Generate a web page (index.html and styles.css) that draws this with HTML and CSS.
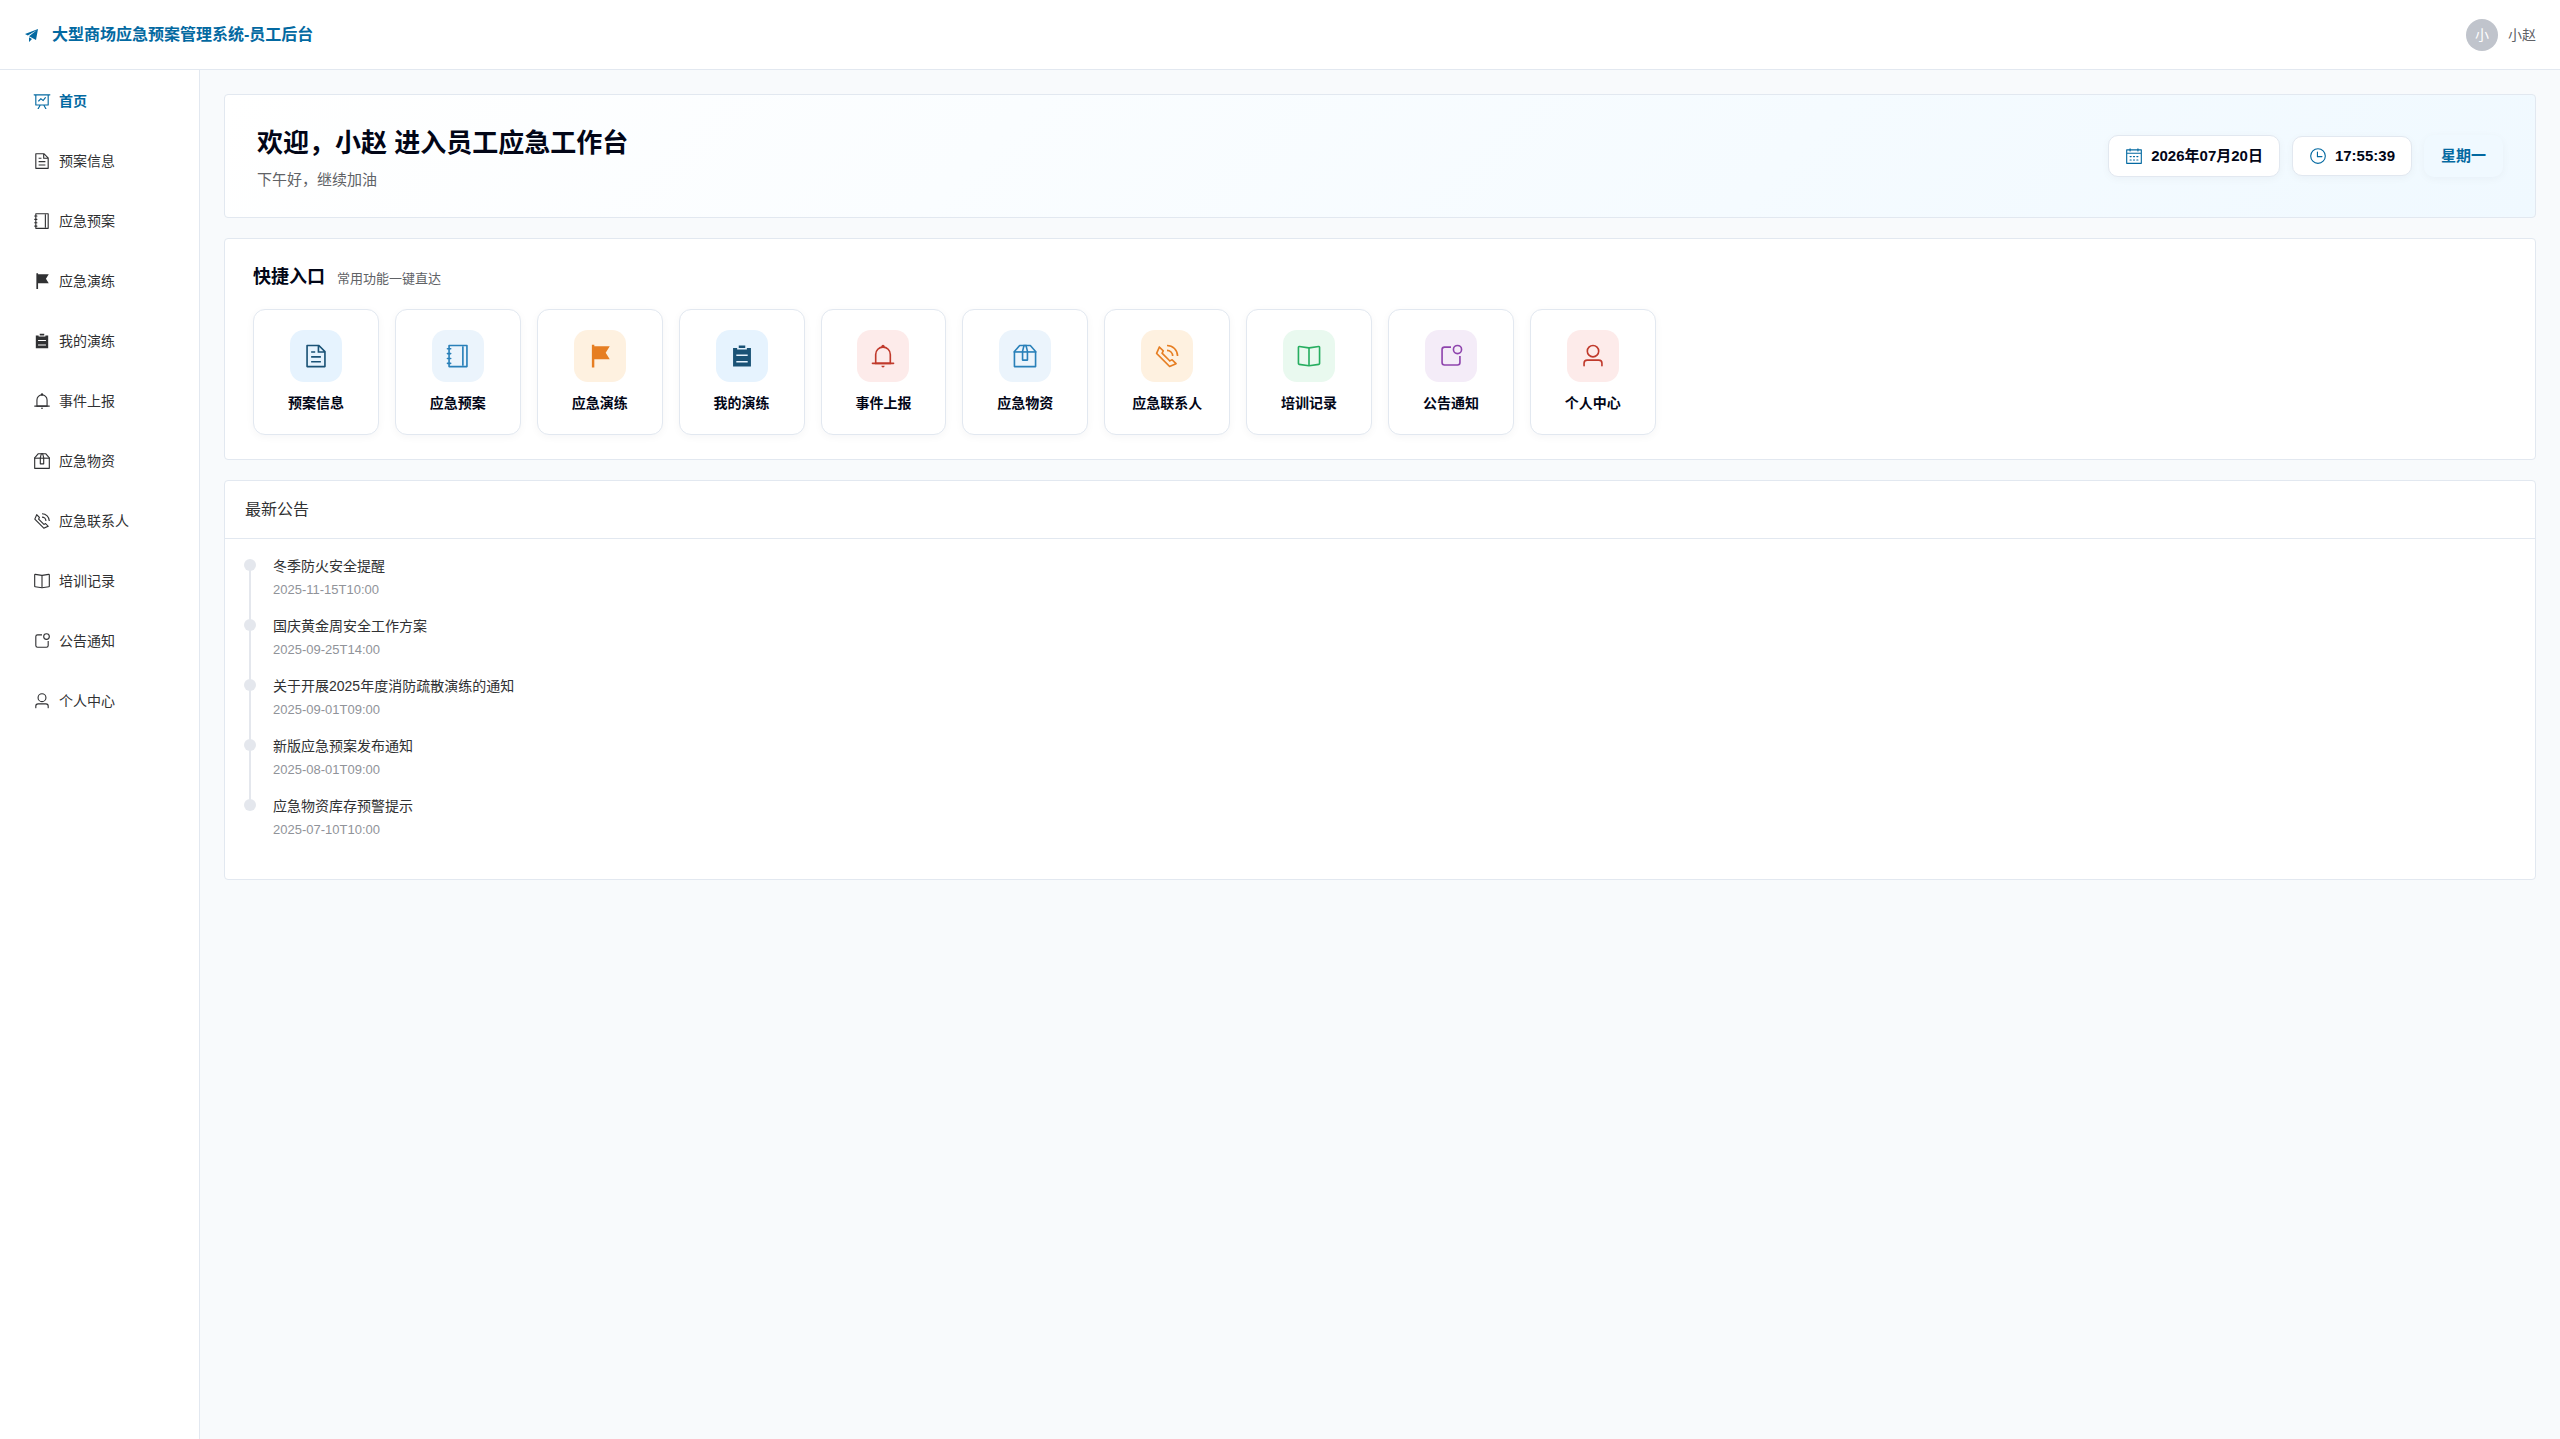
FILE: index.html
```html
<!DOCTYPE html>
<html lang="zh-CN">
<head>
    <meta charset="UTF-8">
    <meta name="viewport" content="width=device-width, initial-scale=1.0">
    <title>大型商场应急预案管理系统-员工后台</title>
    <link rel="stylesheet" href="styles.css">
</head>
<body>
    <!-- 图标库 -->
    <svg class="icon-sprite" xmlns="http://www.w3.org/2000/svg">
        <symbol id="i-promotion" viewBox="0 0 1024 1024"><path d="m64 448 832-320-128 704-446.08-243.328L832 192 242.816 545.536zm256 512V657.024L512 768z"/></symbol>
        <symbol id="i-home" viewBox="0 0 1024 1024"><path d="M359.168 768H160a32 32 0 0 1-32-32V192H64a32 32 0 0 1 0-64h896a32 32 0 1 1 0 64h-64v544a32 32 0 0 1-32 32H665.216l110.848 192h-73.856L591.36 768H433.024L322.176 960H248.32zM832 192H192v512h640zM342.656 534.656a32 32 0 1 1-45.312-45.312L444.992 341.76l125.44 94.08L679.04 300.032a32 32 0 1 1 49.92 39.936L581.632 524.224 451.008 426.24 342.656 534.592z"/></symbol>
        <symbol id="i-document" viewBox="0 0 1024 1024"><path d="M832 384H576V128H192v768h640zm-26.496-64L640 154.496V320zM160 64h480l256 256v608a32 32 0 0 1-32 32H160a32 32 0 0 1-32-32V96a32 32 0 0 1 32-32m160 448h384v64H320zm0-192h160v64H320zm0 384h384v64H320z"/></symbol>
        <symbol id="i-notebook" viewBox="0 0 1024 1024"><path d="M192 128v768h640V128zm-32-64h704a32 32 0 0 1 32 32v832a32 32 0 0 1-32 32H160a32 32 0 0 1-32-32V96a32 32 0 0 1 32-32"/><path d="M672 128h64v768h-64zM96 192h128q32 0 32 32t-32 32H96q-32 0-32-32t32-32m0 192h128q32 0 32 32t-32 32H96q-32 0-32-32t32-32m0 192h128q32 0 32 32t-32 32H96q-32 0-32-32t32-32m0 192h128q32 0 32 32t-32 32H96q-32 0-32-32t32-32"/></symbol>
        <symbol id="i-flag" viewBox="0 0 1024 1024"><path d="M288 128h608L736 384l160 256H288v320h-96V64h96z"/></symbol>
        <symbol id="i-list" viewBox="0 0 1024 1024"><path d="M704 192h160v736H160V192h160v64h384zM288 512h448v-64H288zm0 256h448v-64H288zm96-576V96h256v96z"/></symbol>
        <symbol id="i-bell" viewBox="0 0 1024 1024"><path d="M512 64a64 64 0 0 1 64 64v64H448v-64a64 64 0 0 1 64-64"/><path d="M256 768h512V448a256 256 0 1 0-512 0zm256-640a320 320 0 0 1 320 320v384H192V448a320 320 0 0 1 320-320"/><path d="M96 768h832q32 0 32 32t-32 32H96q-32 0-32-32t32-32m352 128h128a64 64 0 0 1-128 0"/></symbol>
        <symbol id="i-box" viewBox="0 0 1024 1024"><path d="M317.056 128 128 344.064V896h768V344.064L706.944 128zm-14.528-64h418.944a32 32 0 0 1 24.064 10.88l206.528 236.096A32 32 0 0 1 960 332.032V928a32 32 0 0 1-32 32H96a32 32 0 0 1-32-32V332.032a32 32 0 0 1 7.936-21.12L278.4 75.008A32 32 0 0 1 302.528 64"/><path d="M64 320h896v64H64z"/><path d="M448 327.872V640h128V327.872L526.08 128h-28.16zM448 64h128l64 256v352a32 32 0 0 1-32 32H416a32 32 0 0 1-32-32V320z"/></symbol>
        <symbol id="i-phone" viewBox="0 0 1024 1024"><path d="M79.36 432.256 591.744 944.64a32 32 0 0 0 35.2 6.784l253.44-108.544a32 32 0 0 0 9.984-52.032l-153.856-153.92a32 32 0 0 0-36.928-6.016l-69.888 34.944L358.08 394.24l35.008-69.888a32 32 0 0 0-5.952-36.928L233.152 133.568a32 32 0 0 0-52.032 10.048L72.512 397.056a32 32 0 0 0 6.784 35.2zm60.48-29.952 81.536-190.08L325.568 316.48l-24.64 49.216-20.608 41.216 32.576 32.64 271.552 271.552 32.64 32.64 41.216-20.672 49.28-24.576 104.192 104.128-190.08 81.472zM512 320v-64a256 256 0 0 1 256 256h-64a192 192 0 0 0-192-192m0-192V64a448 448 0 0 1 448 448h-64a384 384 0 0 0-384-384"/></symbol>
        <symbol id="i-reading" viewBox="0 0 1024 1024"><path d="m512 863.36 384-54.848v-638.72L525.568 222.72a96 96 0 0 1-27.136 0L128 169.792v638.72zM137.024 106.432l370.432 52.928a32 32 0 0 0 9.088 0l370.432-52.928A64 64 0 0 1 960 169.792v638.72a64 64 0 0 1-54.976 63.36l-388.48 55.488a32 32 0 0 1-9.088 0l-388.48-55.488A64 64 0 0 1 64 808.512v-638.72a64 64 0 0 1 73.024-63.36"/><path d="M480 192h64v704h-64z"/></symbol>
        <symbol id="i-notice" viewBox="0 0 1024 1024"><path d="M512 128v64H256a64 64 0 0 0-64 64v512a64 64 0 0 0 64 64h512a64 64 0 0 0 64-64V512h64v256a128 128 0 0 1-128 128H256a128 128 0 0 1-128-128V256a128 128 0 0 1 128-128z"/><path d="M768 384a128 128 0 1 0 0-256 128 128 0 0 0 0 256m0 64a192 192 0 1 1 0-384 192 192 0 0 1 0 384"/></symbol>
        <symbol id="i-user" viewBox="0 0 1024 1024"><path d="M512 512a192 192 0 1 0 0-384 192 192 0 0 0 0 384m0 64a256 256 0 1 1 0-512 256 256 0 0 1 0 512m320 320v-96a96 96 0 0 0-96-96H288a96 96 0 0 0-96 96v96a32 32 0 1 1-64 0v-96a160 160 0 0 1 160-160h448a160 160 0 0 1 160 160v96a32 32 0 1 1-64 0"/></symbol>
        <symbol id="i-calendar" viewBox="0 0 1024 1024"><path d="M128 384v512h768V192H768v32a32 32 0 1 1-64 0v-32H320v32a32 32 0 0 1-64 0v-32H128v128h768v64zm192-256h384V96a32 32 0 1 1 64 0v32h160a32 32 0 0 1 32 32v768a32 32 0 0 1-32 32H96a32 32 0 0 1-32-32V160a32 32 0 0 1 32-32h160V96a32 32 0 0 1 64 0zm-32 384h64a32 32 0 0 1 0 64h-64a32 32 0 0 1 0-64m0 192h64a32 32 0 1 1 0 64h-64a32 32 0 1 1 0-64m192-192h64a32 32 0 0 1 0 64h-64a32 32 0 0 1 0-64m0 192h64a32 32 0 1 1 0 64h-64a32 32 0 1 1 0-64m192-192h64a32 32 0 1 1 0 64h-64a32 32 0 1 1 0-64m0 192h64a32 32 0 1 1 0 64h-64a32 32 0 1 1 0-64"/></symbol>
        <symbol id="i-clock" viewBox="0 0 1024 1024"><path d="M512 896a384 384 0 1 0 0-768 384 384 0 0 0 0 768m0 64a448 448 0 1 1 0-896 448 448 0 0 1 0 896"/><path d="M480 256a32 32 0 0 1 32 32v256a32 32 0 0 1-64 0V288a32 32 0 0 1 32-32"/><path d="M480 512h256q32 0 32 32t-32 32H480q-32 0-32-32t32-32"/></symbol>
    </svg>

    <header class="header">
        <div class="logo">
            <svg class="logo-icon"><use href="#i-promotion"/></svg>
            <span>大型商场应急预案管理系统-员工后台</span>
        </div>
        <div class="user-info">
            <span class="avatar">小</span>
            <span>小赵</span>
        </div>
    </header>

    <div class="layout">
        <nav class="sidebar">
            <a class="menu-item active" href="#home"><svg><use href="#i-home"/></svg>首页</a>
            <a class="menu-item" href="#plan-info"><svg><use href="#i-document"/></svg>预案信息</a>
            <a class="menu-item" href="#plan"><svg><use href="#i-notebook"/></svg>应急预案</a>
            <a class="menu-item" href="#drill"><svg><use href="#i-flag"/></svg>应急演练</a>
            <a class="menu-item" href="#my-drill"><svg><use href="#i-list"/></svg>我的演练</a>
            <a class="menu-item" href="#event"><svg><use href="#i-bell"/></svg>事件上报</a>
            <a class="menu-item" href="#supplies"><svg><use href="#i-box"/></svg>应急物资</a>
            <a class="menu-item" href="#contacts"><svg><use href="#i-phone"/></svg>应急联系人</a>
            <a class="menu-item" href="#training"><svg><use href="#i-reading"/></svg>培训记录</a>
            <a class="menu-item" href="#notice"><svg><use href="#i-notice"/></svg>公告通知</a>
            <a class="menu-item" href="#profile"><svg><use href="#i-user"/></svg>个人中心</a>
        </nav>

        <main class="main">
            <!-- 欢迎区 -->
            <section class="card welcome">
                <div>
                    <h1>欢迎，小赵 进入员工应急工作台</h1>
                    <p>下午好，继续加油</p>
                </div>
                <div class="chips">
                    <div class="chip"><svg><use href="#i-calendar"/></svg>2026年07月20日</div>
                    <div class="chip time"><svg><use href="#i-clock"/></svg>17:55:39</div>
                    <div class="chip week">星期一</div>
                </div>
            </section>

            <!-- 快捷入口 -->
            <section class="card quick">
                <div class="quick-header">
                    <h2>快捷入口</h2>
                    <span>常用功能一键直达</span>
                </div>
                <div class="quick-grid">
                    <button class="quick-item"><span class="quick-icon navy"><svg><use href="#i-document"/></svg></span>预案信息</button>
                    <button class="quick-item"><span class="quick-icon blue"><svg><use href="#i-notebook"/></svg></span>应急预案</button>
                    <button class="quick-item"><span class="quick-icon orange"><svg><use href="#i-flag"/></svg></span>应急演练</button>
                    <button class="quick-item"><span class="quick-icon navy"><svg><use href="#i-list"/></svg></span>我的演练</button>
                    <button class="quick-item"><span class="quick-icon red"><svg><use href="#i-bell"/></svg></span>事件上报</button>
                    <button class="quick-item"><span class="quick-icon blue"><svg><use href="#i-box"/></svg></span>应急物资</button>
                    <button class="quick-item"><span class="quick-icon orange"><svg><use href="#i-phone"/></svg></span>应急联系人</button>
                    <button class="quick-item"><span class="quick-icon green"><svg><use href="#i-reading"/></svg></span>培训记录</button>
                    <button class="quick-item"><span class="quick-icon purple"><svg><use href="#i-notice"/></svg></span>公告通知</button>
                    <button class="quick-item"><span class="quick-icon red"><svg><use href="#i-user"/></svg></span>个人中心</button>
                </div>
            </section>

            <!-- 最新公告 -->
            <section class="card">
                <div class="notice-header">最新公告</div>
                <ul class="timeline">
                    <li>
                        <div class="notice-title">冬季防火安全提醒</div>
                        <div class="notice-time">2025-11-15T10:00</div>
                    </li>
                    <li>
                        <div class="notice-title">国庆黄金周安全工作方案</div>
                        <div class="notice-time">2025-09-25T14:00</div>
                    </li>
                    <li>
                        <div class="notice-title">关于开展2025年度消防疏散演练的通知</div>
                        <div class="notice-time">2025-09-01T09:00</div>
                    </li>
                    <li>
                        <div class="notice-title">新版应急预案发布通知</div>
                        <div class="notice-time">2025-08-01T09:00</div>
                    </li>
                    <li>
                        <div class="notice-title">应急物资库存预警提示</div>
                        <div class="notice-time">2025-07-10T10:00</div>
                    </li>
                </ul>
            </section>
        </main>
    </div>
</body>
</html>
```
FILE: styles.css
```css
* {
    box-sizing: border-box;
}
body {
    display: flex;
    flex-direction: column;
    min-height: 100vh;
    margin: 0;
    background: #f8fafc;
    color: #303133;
    font-family: "Liberation Sans", "Noto Sans CJK SC", sans-serif;
    font-size: 14px;
}
h1, h2, p, ul {
    margin: 0;
    padding: 0;
}
svg {
    fill: currentColor;
}
.icon-sprite {
    display: none;
}

/* 顶部栏 */
.header {
    display: flex;
    align-items: center;
    justify-content: space-between;
    height: 70px;
    padding: 0 24px;
    background: #fff;
    border-bottom: 1px solid #e2e8f0;
}
.logo {
    display: flex;
    align-items: center;
    gap: 12px;
    font-size: 16px;
    font-weight: 600;
    line-height: 22px;
    color: #0369a1;
}
.logo-icon {
    width: 16px;
    height: 16px;
}
.user-info {
    display: flex;
    align-items: center;
    gap: 10px;
    line-height: 20px;
    color: #606266;
}
.avatar {
    display: flex;
    align-items: center;
    justify-content: center;
    width: 32px;
    height: 32px;
    border-radius: 50%;
    background: #c0c4cc;
    color: #fff;
}

/* 侧边菜单 */
.layout {
    display: flex;
    flex: 1;
}
.sidebar {
    display: flex;
    flex-direction: column;
    gap: 12px;
    width: 200px;
    flex-shrink: 0;
    padding: 7px 10px;
    background: #fff;
    border-right: 1px solid #e2e8f0;
}
.menu-item {
    display: flex;
    align-items: center;
    gap: 8px;
    height: 48px;
    padding: 0 23px;
    line-height: 20px;
    color: #303133;
    text-decoration: none;
}
.menu-item svg {
    width: 18px;
    height: 18px;
}
.menu-item.active {
    color: #0369a1;
    font-weight: 600;
}

/* 主内容 */
.main {
    display: flex;
    flex: 1;
    flex-direction: column;
    gap: 20px;
    min-width: 0;
    padding: 24px;
}
.card {
    background: #fff;
    border: 1px solid #e2e8f0;
    border-radius: 4px;
}
.welcome {
    display: flex;
    align-items: center;
    justify-content: space-between;
    padding: 26px 32px;
    background: linear-gradient(135deg, #fff 0%, #f0f9ff 100%);
}
.welcome h1 {
    margin-bottom: 4px;
    font-size: 26px;
    line-height: 44px;
    color: #020617;
}
.welcome p {
    font-size: 15px;
    line-height: 22px;
    color: #606266;
}
.chips {
    display: flex;
    align-items: center;
    gap: 12px;
}
.chip {
    display: flex;
    align-items: center;
    gap: 8px;
    padding: 10px 16px;
    background: #fff;
    border: 1px solid #e2e8f0;
    border-radius: 10px;
    box-shadow: 0 2px 8px rgba(15, 23, 42, 0.04);
    font-size: 15px;
    font-weight: 600;
    line-height: 20px;
    color: #020617;
}
.chip svg {
    width: 18px;
    height: 18px;
    color: #0369a1;
}
.chip.time {
    line-height: 18px;
}
.chip.week {
    background: #f0f9ff;
    border-color: transparent;
    color: #0369a1;
}

/* 快捷入口 */
.quick {
    padding: 24px 28px;
}
.quick-header {
    display: flex;
    align-items: baseline;
    gap: 12px;
    margin-bottom: 16px;
    line-height: 28px;
}
.quick-header h2 {
    font-size: 18px;
    color: #020617;
}
.quick-header span {
    font-size: 13px;
    color: #606266;
}
.quick-grid {
    display: grid;
    grid-template-columns: repeat(auto-fill, minmax(120px, 1fr));
    gap: 16px;
}
.quick-item {
    display: flex;
    flex-direction: column;
    align-items: center;
    justify-content: center;
    gap: 10px;
    aspect-ratio: 1;
    padding: 0;
    background: #fff;
    border: 1px solid #e2e8f0;
    border-radius: 12px;
    box-shadow: 0 2px 8px rgba(15, 23, 42, 0.04);
    color: #020617;
    font-family: inherit;
    font-size: 14px;
    font-weight: 600;
    line-height: 22px;
    cursor: pointer;
}
.quick-icon {
    display: flex;
    align-items: center;
    justify-content: center;
    width: 52px;
    height: 52px;
    border-radius: 14px;
}
.quick-icon svg {
    width: 26px;
    height: 26px;
}
.navy {
    background: #e6f3fe;
    color: #1a5276;
}
.blue {
    background: #ebf4fc;
    color: #2980b9;
}
.orange {
    background: #fef1e0;
    color: #e67e22;
}
.red {
    background: #fdebea;
    color: #c0392b;
}
.green {
    background: #e9f9ef;
    color: #27ae60;
}
.purple {
    background: #f4ecf8;
    color: #8e44ad;
}

/* 最新公告 */
.notice-header {
    padding: 18px 20px;
    border-bottom: 1px solid #e2e8f0;
    font-size: 16px;
    line-height: 21px;
}
.timeline {
    padding: 16px 20px 24px;
    list-style: none;
}
.timeline li {
    position: relative;
    padding: 0 0 17px 28px;
}
/* 节点与连接线 */
.timeline li::before {
    content: "";
    position: absolute;
    top: 4px;
    left: -1px;
    width: 12px;
    height: 12px;
    border-radius: 50%;
    background: #e4e7ed;
}
.timeline li::after {
    content: "";
    position: absolute;
    top: 10px;
    left: 4px;
    width: 2px;
    height: 100%;
    background: #e4e7ed;
}
.timeline li:last-child::after {
    display: none;
}
.notice-title {
    margin-bottom: 5px;
    line-height: 22px;
}
.notice-time {
    font-size: 13px;
    line-height: 16px;
    color: #909399;
}
```
